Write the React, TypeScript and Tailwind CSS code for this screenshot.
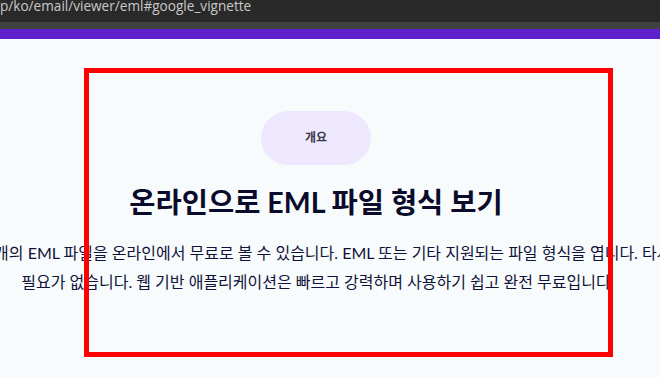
import React from "react";

export default function App() {
  const kr = { fontFamily: 'Lato, "Noto Sans CJK KR", sans-serif' };
  return (
    <div className="relative w-[660px] h-[377px] overflow-hidden bg-[#f8fbfc]" style={kr}>
      <div className="h-[22px] bg-[#292929] overflow-hidden">
        <div
          className="text-[13.6px] leading-[13px] text-[#c8c8c8] whitespace-nowrap mt-[-1px]"
          style={{ fontFamily: '"Open Sans", "Liberation Sans", sans-serif' }}
        >
          p/ko/email/viewer/eml#google_vignette
        </div>
      </div>
      <div className="h-[7px] bg-[#404040]" />
      <div className="h-[10px] bg-[#5e21cc]" />
      <div className="w-[632px] flex flex-col items-center pt-[72px]">
        <div className="w-[110px] h-[54px] rounded-full bg-[#ede8fd] flex items-center justify-center text-[12px] font-bold text-[#3a3a48]">
          개요
        </div>
        <h1 className="mt-[20px] text-[28.5px] leading-[34px] font-bold text-[#0b0b2b] whitespace-nowrap">
          온라인으로 EML 파일 형식 보기
        </h1>
        <div className="mt-[19px] w-full flex flex-col items-center text-[16px] leading-[29px] text-[#10123a]">
          <div className="whitespace-nowrap">
            여러 개의 EML 파일을 온라인에서 무료로 볼 수 있습니다. EML 또는 기타 지원되는 파일 형식을 엽니다. 타사
          </div>
          <div className="whitespace-nowrap">
            필요가 없습니다. 웹 기반 애플리케이션은 빠르고 강력하며 사용하기 쉽고 완전 무료입니다
          </div>
        </div>
      </div>
      <div className="absolute left-[84px] top-[68px] w-[529px] h-[289px] border-[5px] border-[#ff0000] pointer-events-none" />
    </div>
  );
}
